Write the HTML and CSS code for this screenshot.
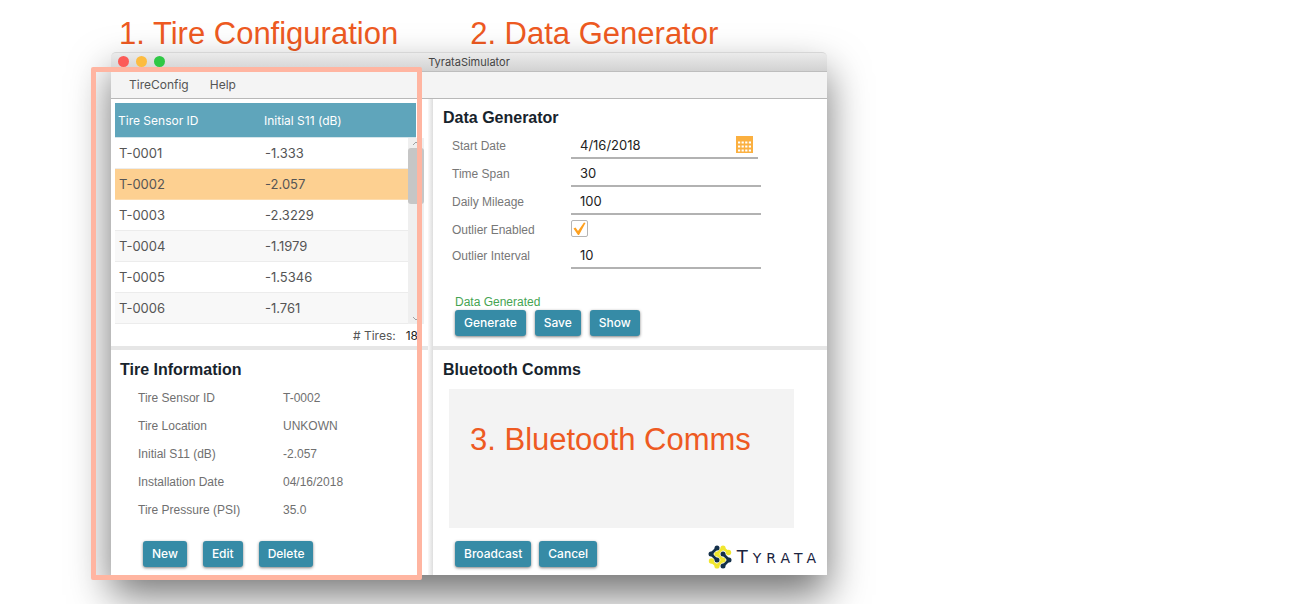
FILE: index.html
```html
<!DOCTYPE html>
<html lang="en">
<head>
<meta charset="utf-8">
<title>TyrataSimulator</title>
<link rel="stylesheet" href="styles.css">
</head>
<body>
<main class="slide">
  <header class="callouts">
    <p class="callout">1. Tire Configuration</p>
    <p class="callout">2. Data Generator</p>
  </header>
  <section class="window">
    <div class="titlebar">
      <div class="lights"><span class="light red"></span><span class="light amber"></span><span class="light green"></span></div>
      <h1 class="title">TyrataSimulator</h1>
    </div>
    <nav class="menubar">
      <button class="menu" type="button">TireConfig</button>
      <button class="menu" type="button">Help</button>
    </nav>
    <div class="content">
      <div class="column">
        <section class="panel list-panel tire-list">
          <div class="table-wrap">
            <table class="tires">
              <thead><tr><th class="id-col" scope="col">Tire Sensor ID</th><th scope="col">Initial S11 (dB)</th></tr></thead>
              <tbody>
                <tr><td>T-0001</td><td>-1.333</td></tr>
                <tr class="selected"><td>T-0002</td><td>-2.057</td></tr>
                <tr><td>T-0003</td><td>-2.3229</td></tr>
                <tr><td>T-0004</td><td>-1.1979</td></tr>
                <tr><td>T-0005</td><td>-1.5346</td></tr>
                <tr><td>T-0006</td><td>-1.761</td></tr>
              </tbody>
            </table>
            <div class="scrollbar">
              <svg class="arrow" viewBox="0 0 8 6"><path d="M1 5l3-3 3 3"/></svg>
              <span class="thumb"></span>
              <svg class="arrow" viewBox="0 0 8 6"><path d="M1 1l3 3 3-3"/></svg>
            </div>
          </div>
          <p class="count"><span># Tires:</span><span class="count-value">18</span></p>
        </section>
        <section class="panel info-panel">
          <h2 class="heading">Tire Information</h2>
          <dl class="info">
            <dt>Tire Sensor ID</dt><dd>T-0002</dd>
            <dt>Tire Location</dt><dd>UNKOWN</dd>
            <dt>Initial S11 (dB)</dt><dd>-2.057</dd>
            <dt>Installation Date</dt><dd>04/16/2018</dd>
            <dt>Tire Pressure (PSI)</dt><dd>35.0</dd>
          </dl>
          <div class="buttons info-buttons">
            <button class="btn" type="button">New</button>
            <button class="btn" type="button">Edit</button>
            <button class="btn" type="button">Delete</button>
          </div>
        </section>
      </div>
      <div class="splitter"></div>
      <div class="column">
        <section class="panel list-panel generator">
          <h2 class="heading">Data Generator</h2>
          <form class="form">
            <div class="field">
              <label for="start">Start Date</label>
              <div class="date">
                <input class="text" id="start" type="text" value="4/16/2018">
                <button class="calendar" type="button" aria-label="Choose date">
                  <svg viewBox="0 0 17 17" width="17" height="17"><path fill="#fbb040" d="M0 0h17v17H0z"/><path d="M2 6.500h13M2 10.500h13M2 14.500h13" stroke="#fff" stroke-width="2" stroke-dasharray="2.200 1.400" fill="none"/></svg>
                </button>
              </div>
            </div>
            <div class="field"><label for="span">Time Span</label><input class="text" id="span" type="text" value="30"></div>
            <div class="field"><label for="miles">Daily Mileage</label><input class="text" id="miles" type="text" value="100"></div>
            <div class="field field-check"><label for="outlier">Outlier Enabled</label>
              <span class="check"><input class="box" id="outlier" type="checkbox" checked><svg class="tick" viewBox="0 0 17 17"><path d="M2.500 8.500l2-1 2.500 3.500 6-8.500 1.500.5-6.500 12h-1z" fill="#ffa01e"/></svg></span></div>
            <div class="field"><label for="interval">Outlier Interval</label><input class="text" id="interval" type="text" value="10"></div>
          </form>
          <div class="actions">
            <p class="status">Data Generated</p>
            <div class="buttons">
              <button class="btn" type="button">Generate</button>
              <button class="btn" type="button">Save</button>
              <button class="btn" type="button">Show</button>
            </div>
          </div>
        </section>
        <section class="panel comms">
          <h2 class="heading">Bluetooth Comms</h2>
          <div class="log-wrap">
            <textarea class="log" aria-label="Bluetooth log" readonly></textarea>
            <p class="callout callout-log">3. Bluetooth Comms</p>
          </div>
          <div class="footer">
            <div class="buttons">
              <button class="btn" type="button">Broadcast</button>
              <button class="btn" type="button">Cancel</button>
            </div>
            <div class="brand">
              <svg class="mark" viewBox="0 0 24 24" width="24" height="24">
                <g fill="none" stroke-width="2.800" stroke-linecap="round" stroke-linejoin="round">
                  <path stroke="#f0e62e" d="M20.500 7.500L15 3 9 9l6 6-6 6-6-5"/>
                  <path stroke="#14304a" d="M9 3L3 9l6 6M15 9l6 6-6 6"/>
                </g>
                <g fill="#f0e62e"><circle cx="15" cy="3" r="2.600"/><circle cx="20.500" cy="7.500" r="2.700"/><circle cx="3.500" cy="16" r="2.700"/><circle cx="9" cy="21" r="2.600"/><circle cx="9" cy="9" r="2.600"/><circle cx="15" cy="15" r="2.600"/></g>
                <g fill="#14304a"><circle cx="9" cy="3" r="2.500"/><circle cx="3" cy="9" r="2.500"/><circle cx="9" cy="15" r="2.500"/><circle cx="15" cy="9" r="2.500"/><circle cx="21" cy="15" r="2.500"/><circle cx="15" cy="21" r="2.500"/></g>
              </svg>
              <span class="wordmark">Tyrata</span>
            </div>
          </div>
        </section>
      </div>
    </div>
    <div class="highlight"></div>
  </section>
</main>
</body>
</html>
```
FILE: styles.css
```css
* { box-sizing: border-box; }
body { margin: 0; background: #fff; color: #555; font: 12px/16px Inter, "Liberation Sans", sans-serif; }
h1, h2, p, dl, dd { margin: 0; }
button, input, textarea { font: inherit; color: inherit; }
button { border: 0; padding: 0; background: none; }

.slide { min-height: 100vh; padding: 0 24px 28px 111px; overflow: hidden; }
.callouts { display: flex; gap: 72px; height: 52px; padding: 16px 0 0 8px; }
.callout { font: 31px/36px "Liberation Sans", Arial, sans-serif; color: #ee5a22; white-space: nowrap; }

.window { position: relative; max-width: 716px; border-radius: 5px 5px 0 0; background: #fff; box-shadow: 0 20px 40px rgba(0, 0, 0, .55); }
.titlebar { position: relative; display: flex; align-items: center; justify-content: center; height: 20px; border-radius: 5px 5px 0 0; border-top: 1px solid #d6d6d6; border-bottom: 1px solid #bdbdbd; background: linear-gradient(#ebebeb, #d2d2d2); }
.lights { position: absolute; left: 7px; top: 3px; display: flex; gap: 7px; }
.light { width: 11px; height: 11px; border-radius: 50%; }
.red { background: #fc5b57; }
.amber { background: #fdbc40; }
.green { background: #2fc845; }
.title { font-size: 11px; font-weight: 400; line-height: 16px; color: #444; }
.menubar { display: flex; gap: 21px; height: 27px; padding-left: 18px; border-bottom: 1px solid #b8b8b8; background: #f4f4f4; }

.content { display: grid; grid-template-columns: 317px 5px minmax(0, 1fr); }
.splitter { background: linear-gradient(90deg, #fafafa, #dedede); }
.panel { display: flex; flex-direction: column; }
.list-panel { height: 251px; border-bottom: 4px solid #e6e6e6; }

.tire-list { padding: 4px 12px 0 4px; }
.table-wrap { position: relative; }
.tires { width: 100%; border-collapse: collapse; table-layout: fixed; }
.tires th { height: 34px; padding: 2px 3px 0; background: #5fa5bb; border-bottom: 1px solid #d5e5ea; color: #fff; font-weight: 400; text-align: left; }
.tires .id-col { width: 146px; }
.tires td { height: 31px; padding: 0 4px; border-bottom: 1px solid #ececec; font-size: 13px; }
.tires tr:nth-child(even) td { background: #f8f8f8; }
.tires tr.selected td { background: #fdd091; border-color: #fddcae; }
.scrollbar { position: absolute; top: 35px; right: -8px; bottom: 0; width: 16px; display: flex; flex-direction: column; align-items: center; background: #efefef; }
.arrow { width: 8px; height: 6px; margin: 2px 0; fill: none; stroke: #a0a0a0; }
.thumb { width: 16px; height: 56px; margin-bottom: auto; border-radius: 3px; background: #c6c6c6; }
.count { display: flex; justify-content: flex-end; gap: 10px; padding-top: 4px; margin-right: -2px; }
.count-value { color: #222; }

.heading { font: bold 16px/20px "Liberation Sans", Arial, sans-serif; color: #17232c; }
.info-panel { padding: 10px 9px 0; }
.info { display: grid; grid-template-columns: 145px 1fr; padding: 4px 0 0 18px; font: 12px/28px "Liberation Sans", Arial, sans-serif; color: #707070; }
.buttons { display: flex; gap: 8px; }
.info-buttons { gap: 16px; padding: 17px 0 8px 23px; }
.btn { height: 26px; padding: 0 9px; border-radius: 3px; background: #368ba6; color: #fff; font-weight: 500; box-shadow: 0 1px 3px rgba(0, 0, 0, .5); }

.generator { padding: 9px 10px 0; }
.form { padding: 3px 56px 0 9px; }
.field { display: grid; grid-template: 28px / 119px 1fr; height: 28px; }
.field-check { height: 26px; }
.field label { font: 12px/30px "Liberation Sans", Arial, sans-serif; color: #777; }
.text { width: 100%; min-width: 0; height: 28px; padding: 1px 9px 0; border: 0; border-bottom: 2px solid #b2b2b2; background: none; color: #222; font-size: 13px; outline: 0; }
.date { display: flex; margin-right: 3px; border-bottom: 2px solid #b2b2b2; }
.date .text { border: 0; height: 26px; }
.calendar { display: flex; align-items: center; padding-right: 5px; }
.check { position: relative; width: 17px; height: 17px; margin-top: 5px; }
.box { appearance: none; display: block; width: 17px; height: 17px; margin: 0; border: 1px solid #b5b5b5; border-radius: 2px; background: #fff; }
.tick { position: absolute; inset: 0; pointer-events: none; }
.actions { padding: 25px 0 0 12px; }
.actions .buttons { gap: 9px; }
.status { font: 12px/16px "Liberation Sans", Arial, sans-serif; color: #45a452; }

.comms { padding: 10px 10px 0; }
.log-wrap { position: relative; padding: 9px 23px 0 6px; }
.log { display: block; width: 100%; height: 139px; border: 0; background: #f3f3f3; resize: none; outline: 0; }
.callout-log { position: absolute; left: 27px; top: 42px; }
.footer { display: flex; justify-content: space-between; padding: 13px 0 8px 12px; }
.brand { display: flex; align-items: center; gap: 5px; height: 32px; margin-bottom: -6px; }
.wordmark { font: 14px/20px "DejaVu Sans", sans-serif; letter-spacing: 5px; text-transform: uppercase; color: #1b2440; margin-right: -4px; }
.wordmark::first-letter { font-size: 18px; }

.highlight { position: absolute; left: -20px; top: 15px; bottom: -5px; width: 331px; border: 5px solid #ffb5a1; border-radius: 2px; pointer-events: none; }
```
